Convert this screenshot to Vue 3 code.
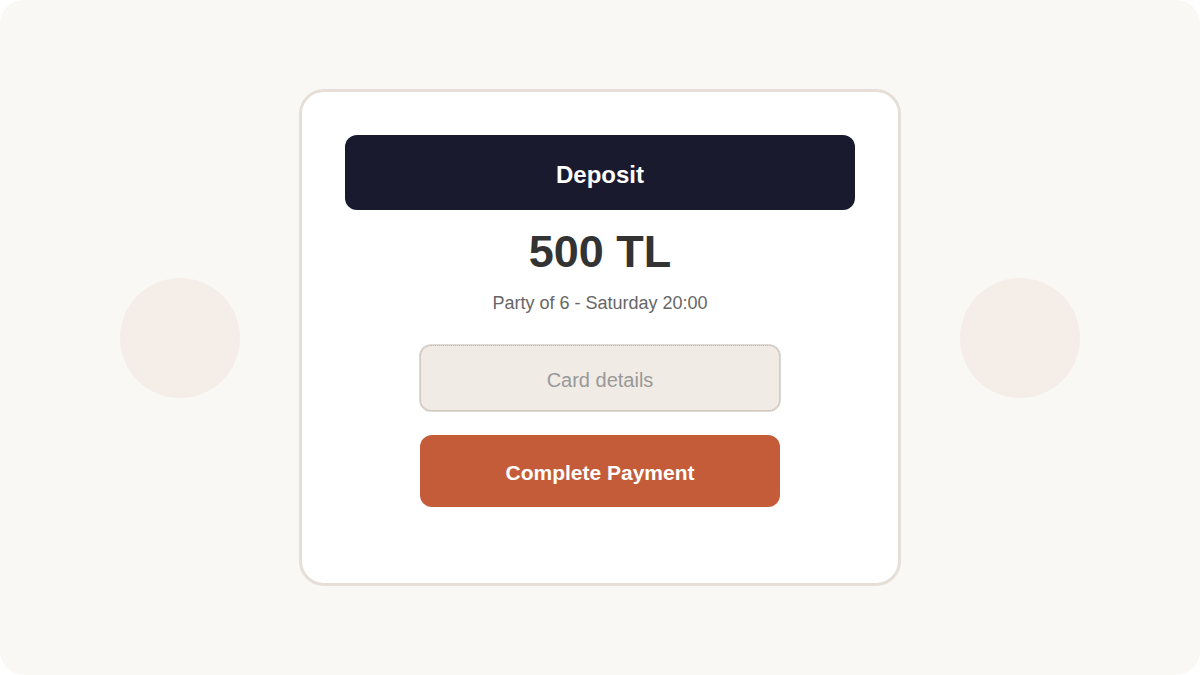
<script setup>
import { ref } from 'vue'

const deposit = ref({
  amount: '500 TL',
  details: 'Party of 6 - Saturday 20:00'
})
const cardDetails = ref('')
</script>

<template>
  <main class="page">
    <span class="circle" aria-hidden="true"></span>
    <form class="card" @submit.prevent>
      <h1 class="card-header">Deposit</h1>
      <p class="amount">{{ deposit.amount }}</p>
      <p class="details">{{ deposit.details }}</p>
      <input
        v-model="cardDetails"
        class="card-input"
        type="text"
        placeholder="Card details"
        aria-label="Card details"
      />
      <button class="pay-button" type="submit">Complete Payment</button>
    </form>
    <span class="circle" aria-hidden="true"></span>
  </main>
</template>

<style>
body {
  margin: 0;
  background: #ffffff;
}
</style>

<style scoped>
.page {
  display: flex;
  align-items: center;
  justify-content: space-between;
  box-sizing: border-box;
  min-height: 100vh;
  padding: 24px 10%;
  border-radius: 24px;
  background: #faf8f4;
  font-family: "Liberation Sans", Arial, sans-serif;
}

.circle {
  flex: none;
  width: 120px;
  height: 120px;
  border-radius: 50%;
  background: #f5ede8;
}

.card {
  display: flex;
  flex-direction: column;
  align-items: center;
  box-sizing: border-box;
  width: 100%;
  max-width: 602px;
  padding: 43px 43px 76px;
  border: 3px solid #e5dfd7;
  border-radius: 25px;
  background: #ffffff;
}

.card-header {
  box-sizing: border-box;
  width: 100%;
  margin: 0;
  padding: 4px 0 0;
  border-radius: 12px;
  background: #1a1a2e;
  color: #ffffff;
  font-size: 24px;
  font-weight: bold;
  line-height: 71px;
  text-align: center;
}

.amount {
  margin: 16px 0 0;
  color: #333333;
  font-size: 45px;
  font-weight: bold;
  line-height: 52px;
}

.details {
  margin: 13px 0 0;
  color: #666666;
  font-size: 18px;
  line-height: 24px;
}

.card-input,
.pay-button {
  box-sizing: border-box;
  width: 100%;
  border-radius: 12px;
  font-family: inherit;
  text-align: center;
}

.card-input {
  max-width: 362px;
  height: 68px;
  margin: 29px 0 0;
  padding: 4px 16px 0;
  border: 2px solid #e0dad2;
  outline: 1px dotted #c4bab0;
  outline-offset: -2px;
  background: #f0ebe4;
  color: #333333;
  font-size: 20px;
}

.card-input::placeholder {
  color: #999999;
  opacity: 1;
}

.pay-button {
  max-width: 360px;
  height: 72px;
  margin: 23px 0 0;
  padding: 4px 16px 0;
  border: none;
  background: #c45c3a;
  color: #ffffff;
  font-size: 21px;
  font-weight: bold;
  cursor: pointer;
}
</style>
